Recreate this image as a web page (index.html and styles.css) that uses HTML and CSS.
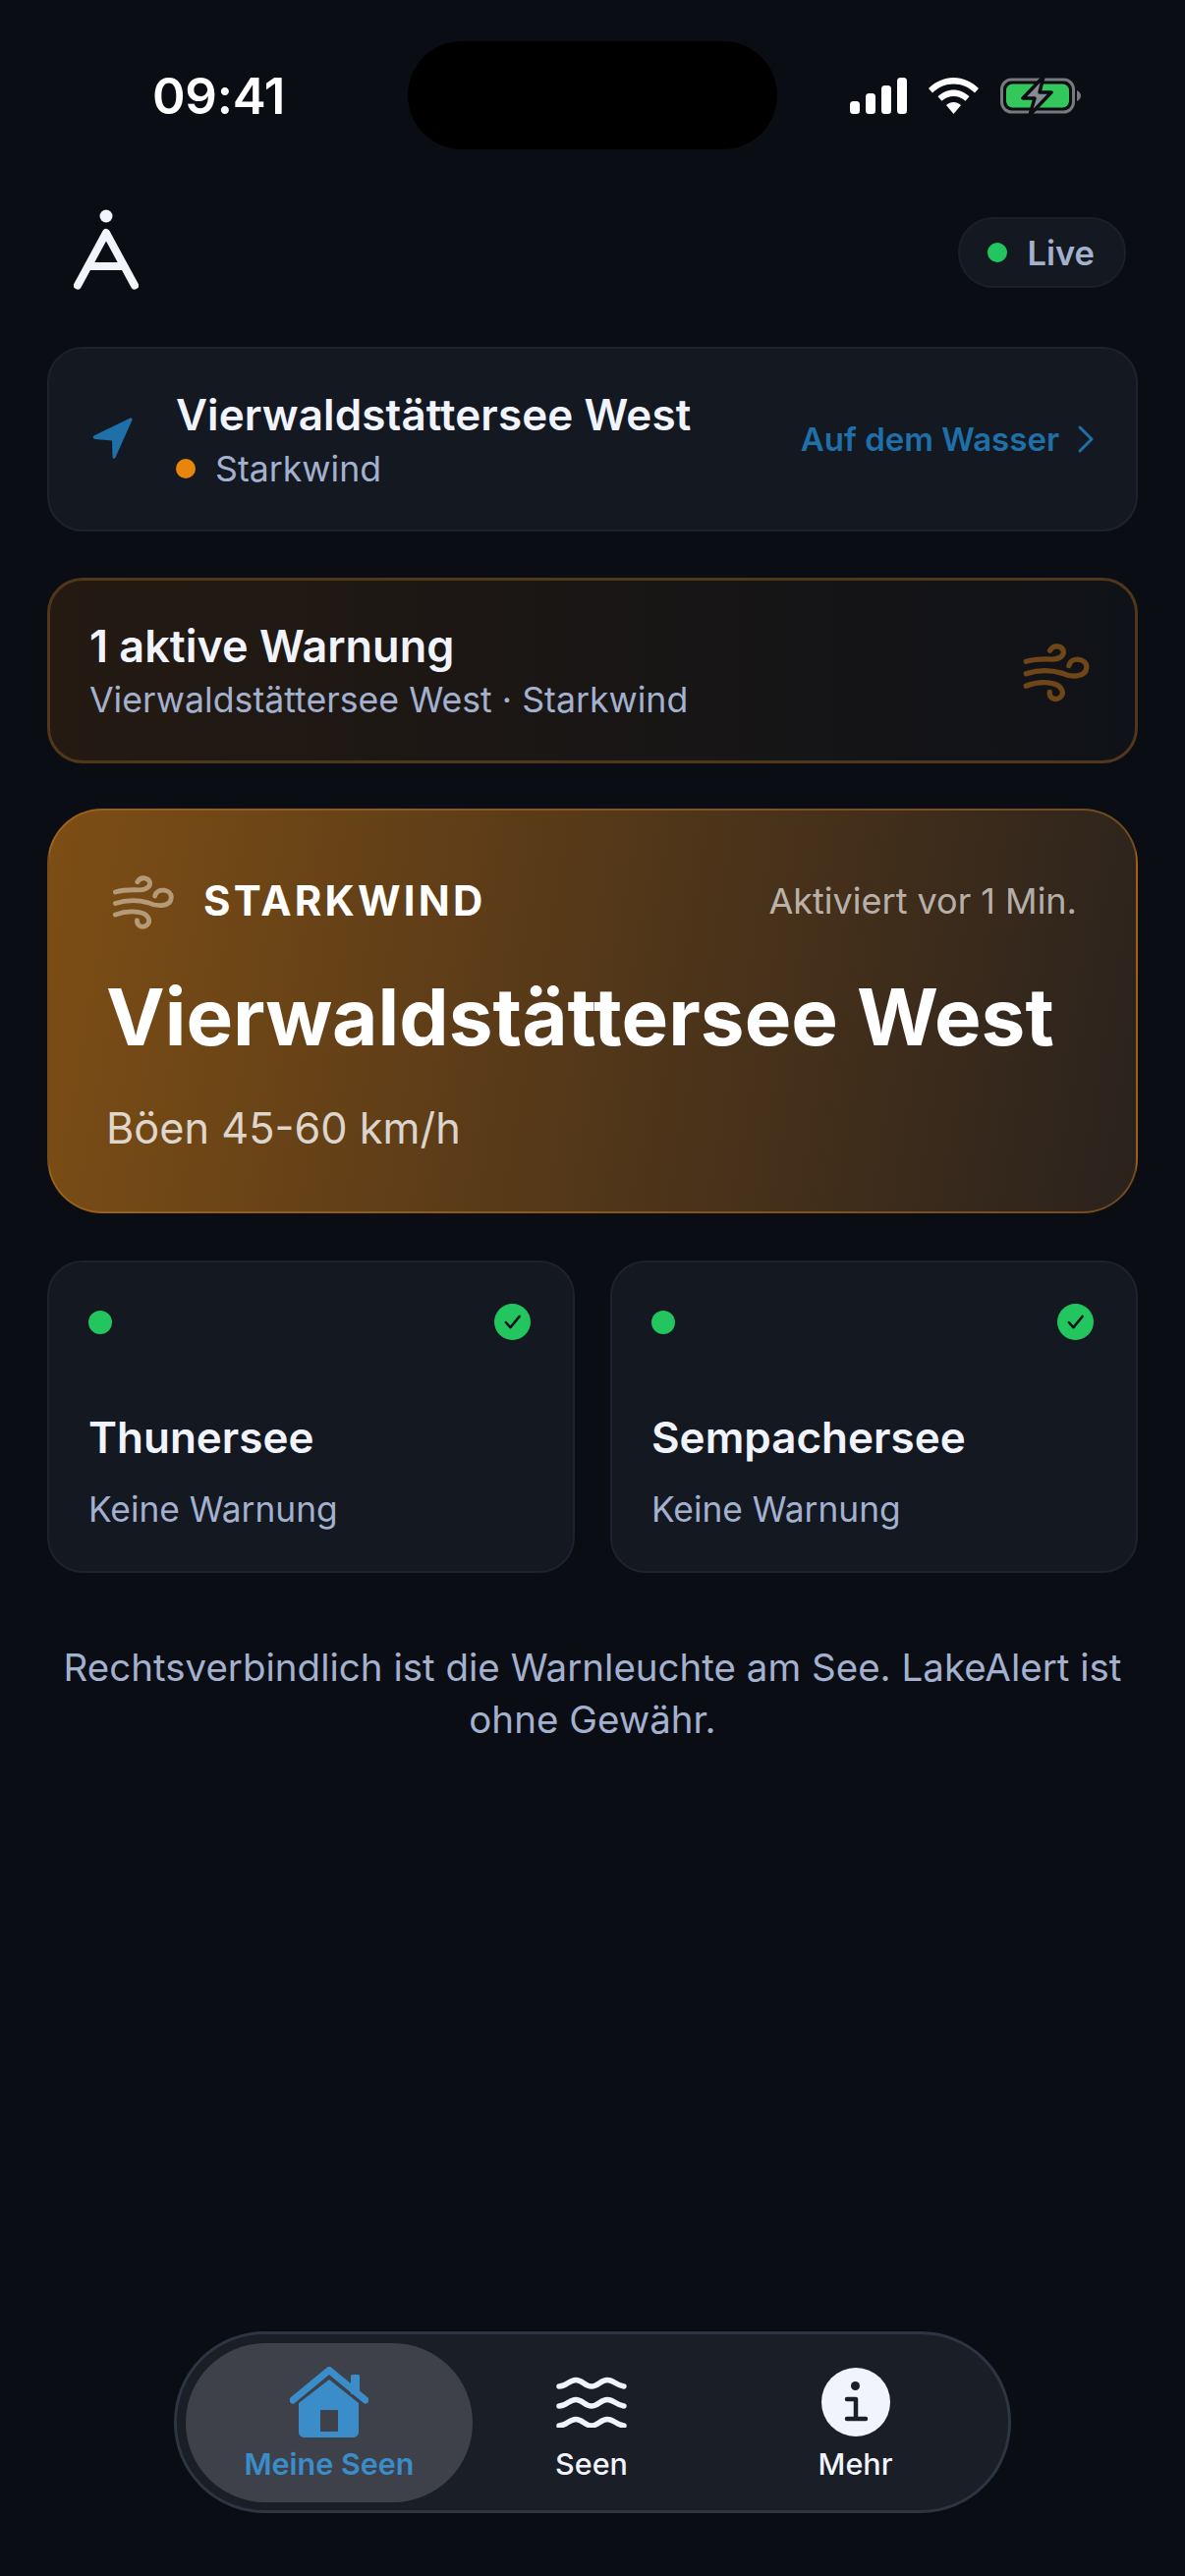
FILE: index.html
```html
<!DOCTYPE html>
<html lang="de">
<head>
    <meta charset="UTF-8">
    <meta name="viewport" content="width=device-width, initial-scale=1.0">
    <title>LakeAlert</title>
    <link rel="stylesheet" href="styles.css">
</head>
<body>

    <svg class="defs" width="0" height="0">
        <symbol id="wind" viewBox="0 0 360 240">
            <g fill="none" stroke="currentColor" stroke-width="16" stroke-linecap="round">
                <path d="M74 92C100 84 130 84 155 85C180 85 192 72 190 60C187 45 160 36 148 58"/>
                <path d="M74 130C110 118 150 118 185 128C210 140 260 145 262 110C262 82 215 75 207 105"/>
                <path d="M74 168C100 158 130 155 155 160C185 165 195 190 180 203C165 215 145 205 147 187"/>
            </g>
        </symbol>
        <symbol id="check" viewBox="0 0 36 36">
            <circle cx="18" cy="18" r="18" fill="#22c55e"/>
            <path d="M11.500 18.500l4.500 5 9-11" fill="none" stroke="#0c1218" stroke-width="2.400" stroke-linecap="round" stroke-linejoin="round"/>
        </symbol>
    </svg>

    <!-- status bar -->
    <div class="status">
        <span class="time">09:41</span>
        <div class="island"></div>
        <div class="status-icons">
            <svg width="58" height="37" viewBox="0 0 58 37" fill="#fff">
                <rect x="0" y="24" width="10" height="13" rx="3.500"/>
                <rect x="16" y="16" width="10" height="21" rx="3.500"/>
                <rect x="32" y="8" width="10" height="29" rx="3.500"/>
                <rect x="48" y="0" width="10" height="37" rx="3.500"/>
            </svg>
            <svg width="51" height="37" viewBox="0 0 51 37" fill="#fff">
                <path d="M25.500 0C35 0 44 4 51 11L47 15.500C41 9.700 33.500 6.500 25.500 6.500C17.500 6.500 10 9.700 4 15.500L0 11C7 4 16 0 25.500 0Z"/>
                <path d="M25.500 12.500C31.500 12.500 37 15 41.500 19.300L37.500 23.800C34.200 20.700 30 19 25.500 19C21 19 16.800 20.700 13.500 23.800L9.500 19.300C14 15 19.500 12.500 25.500 12.500Z"/>
                <path d="M25.500 25C28.200 25 30.800 26 33 28L25.500 37L18 28C20.200 26 22.800 25 25.500 25Z"/>
            </svg>
            <svg width="82" height="41" viewBox="0 0 82 41">
                <rect x="1.500" y="4" width="73" height="33" rx="10" fill="none" stroke="#77797d" stroke-width="3"/>
                <rect x="6" y="8.500" width="64" height="24" rx="6.500" fill="#34c759"/>
                <path d="M78 15c2.500 1 4 3 4 5.500s-1.500 4.500-4 5.500z" fill="#77797d"/>
                <path d="M44 1L23 23H35L30 40L52 17H40Z" fill="#8a8b8f" stroke="#0a0d14" stroke-width="3.500" stroke-linejoin="round"/>
            </svg>
        </div>
    </div>

    <header class="top">
        <svg class="logo" width="66" height="84" viewBox="0 0 66 84">
            <circle cx="33" cy="7" r="6.500" fill="#f1f4fc"/>
            <path d="M4 77.500L33 24L62 77.500M15 58H51" fill="none" stroke="#f1f4fc" stroke-width="8" stroke-linecap="round" stroke-linejoin="round"/>
        </svg>
        <div class="live"><i class="dot dot-green"></i>Live</div>
    </header>

    <main class="content">
        <section class="card current">
            <svg class="nav-icon" width="44" height="44" viewBox="0 0 44 44">
                <path d="M41.500 2.500L24.500 40.500C23.500 42.500 21.500 42 21.500 40L21 23.500L4 22C1.500 21.500 1 19.500 2.500 18.500L38.500 1C40.500 0 42 0.800 41.500 2.500Z" fill="#1f6fa8"/>
            </svg>
            <div class="current-text">
                <div class="current-name">Vierwaldstättersee West</div>
                <div class="current-state"><i class="dot dot-orange"></i>Starkwind</div>
            </div>
            <div class="current-link">
                Auf dem Wasser
                <svg width="18" height="28" viewBox="0 0 18 28">
                    <path d="M3 2L15 14L3 26" fill="none" stroke="#1f6fa8" stroke-width="3" stroke-linecap="round" stroke-linejoin="round"/>
                </svg>
            </div>
        </section>

        <section class="card warning">
            <div>
                <div class="warning-title">1 aktive Warnung</div>
                <div class="warning-sub">Vierwaldstättersee West · Starkwind</div>
            </div>
            <svg class="warning-icon" width="118" height="79"><use href="#wind"/></svg>
        </section>

        <section class="hero">
            <div class="hero-top">
                <svg class="hero-icon" width="109" height="73"><use href="#wind"/></svg>
                <span class="hero-label">STARKWIND</span>
                <span class="hero-time">Aktiviert vor 1 Min.</span>
            </div>
            <h1 class="hero-title">Vierwaldstättersee West</h1>
            <div class="hero-sub">Böen 45-60 km/h</div>
        </section>

        <div class="lakes">
            <section class="card lake">
                <div class="lake-top">
                    <i class="dot dot-lake"></i>
                    <svg width="37" height="37"><use href="#check"/></svg>
                </div>
                <div class="lake-name">Thunersee</div>
                <div class="lake-state">Keine Warnung</div>
            </section>
            <section class="card lake">
                <div class="lake-top">
                    <i class="dot dot-lake"></i>
                    <svg width="37" height="37"><use href="#check"/></svg>
                </div>
                <div class="lake-name">Sempachersee</div>
                <div class="lake-state">Keine Warnung</div>
            </section>
        </div>

        <p class="note">Rechtsverbindlich ist die Warnleuchte am See. LakeAlert ist ohne Gewähr.</p>
    </main>

    <nav class="tabs">
        <div class="tab tab-active">
            <div class="tab-icon">
                <svg width="80" height="72" viewBox="0 0 80 72">
                    <rect x="62" y="8" width="9" height="20" rx="1.500" fill="#3a8dc9"/>
                    <path d="M3 34L40 3.500L77 34" fill="none" stroke="#3a8dc9" stroke-width="7" stroke-linecap="round" stroke-linejoin="round"/>
                    <path d="M9 37L40 13L70 37V66C70 69.500 68 72 64 72H15C11 72 9 69.500 9 66Z" fill="#3a8dc9"/>
                    <rect x="31" y="44" width="18" height="22" rx="1" fill="#3e4149"/>
                </svg>
            </div>
            <span>Meine Seen</span>
        </div>
        <div class="tab">
            <div class="tab-icon">
                <svg width="72" height="52" viewBox="0 0 72 52">
                    <g fill="none" stroke="#f1f4fc" stroke-width="5.500" stroke-linecap="round">
                        <path d="M3 10C11 10 13 3.500 20 3.500C27 3.500 29 10 36 10C43 10 45 3.500 52 3.500C59 3.500 61 9 69 10"/>
                        <path d="M3 30C11 30 13 23.500 20 23.500C27 23.500 29 30 36 30C43 30 45 23.500 52 23.500C59 23.500 61 29 69 30"/>
                        <path d="M3 50C11 50 13 43.500 20 43.500C27 43.500 29 50 36 50C43 50 45 43.500 52 43.500C59 43.500 61 49 69 50"/>
                    </g>
                </svg>
            </div>
            <span>Seen</span>
        </div>
        <div class="tab">
            <div class="tab-icon">
                <svg width="70" height="70" viewBox="0 0 70 70">
                    <circle cx="35" cy="35" r="35" fill="#f1f4fc"/>
                    <circle cx="34.500" cy="18.500" r="4.500" fill="#1a1e27"/>
                    <path d="M26 32H35V52M26 52H45" fill="none" stroke="#1a1e27" stroke-width="4.500" stroke-linecap="round" stroke-linejoin="round"/>
                </svg>
            </div>
            <span>Mehr</span>
        </div>
    </nav>

</body>
</html>
```

FILE: styles.css
```css
* {
    box-sizing: border-box;
}
html, body {
    margin: 0;
    padding: 0;
}
body {
    width: 1206px;
    height: 2622px;
    display: flex;
    flex-direction: column;
    overflow: hidden;
    font-family: Inter, "Liberation Sans", sans-serif;
    background-color: #0a0d14;
    color: #f1f4fc;
}
.defs {
    position: absolute;
}
.dot {
    display: block;
    border-radius: 50%;
    flex: none;
}
.dot-green {
    width: 20px;
    height: 20px;
    background-color: #22c55e;
}
.dot-orange {
    width: 20px;
    height: 20px;
    background-color: #e8850c;
}
.dot-lake {
    width: 24px;
    height: 24px;
    background-color: #22c55e;
}

/* status bar */
.status {
    display: flex;
    align-items: center;
    height: 152px;
    padding-top: 42px;
}
.time {
    width: 415px;
    padding-left: 155px;
    font-size: 51px;
    font-weight: 600;
    letter-spacing: -0.3px;
    color: #fff;
}
.island {
    width: 376px;
    height: 110px;
    border-radius: 55px;
    background-color: #000;
}
.status-icons {
    display: flex;
    align-items: center;
    gap: 22px;
    margin-left: 74px;
}

/* logo and live badge */
.top {
    display: flex;
    justify-content: space-between;
    align-items: center;
    height: 90px;
    margin-top: 60px;
    padding: 0 60px 0 75px;
}
.logo {
    margin-bottom: 4px;
}
.live {
    display: flex;
    align-items: center;
    gap: 20px;
    height: 72px;
    padding: 0 30px 0 28px;
    border: 2px solid #1a1f28;
    border-radius: 36px;
    background-color: #131821;
    font-size: 34.500px;
    font-weight: 600;
    color: #a3b1cf;
}

.content {
    padding: 0 48px;
}
.card {
    border: 2px solid #1d222c;
    border-radius: 36px;
    background-color: #131821;
}

/* current lake */
.current {
    display: flex;
    align-items: center;
    height: 188px;
    margin-top: 51px;
    padding: 0 42px 0 43px;
}
.nav-icon {
    flex: none;
}
.current-text {
    margin-left: 42px;
    flex: 1;
}
.current-name {
    font-size: 44px;
    font-weight: 600;
    line-height: 54px;
    letter-spacing: 0.1px;
}
.current-state {
    display: flex;
    align-items: center;
    gap: 20px;
    margin-top: 6px;
    font-size: 35.700px;
    line-height: 44px;
    color: #a3b1cf;
}
.current-link {
    display: flex;
    align-items: center;
    gap: 18px;
    font-size: 33px;
    font-weight: 600;
    color: #1f6fa8;
}

/* warning banner */
.warning {
    display: flex;
    justify-content: space-between;
    align-items: center;
    height: 189px;
    margin-top: 47px;
    padding: 0 0 0 40px;
    border: 3px solid #50371a;
    background: linear-gradient(90deg, #241a12, #0f1218);
}
.warning-title {
    font-size: 45px;
    font-weight: 600;
    line-height: 54px;
    margin-bottom: 4px;
}
.warning-sub {
    font-size: 35.700px;
    line-height: 46px;
    color: #a3b1cf;
}
.warning-icon {
    color: #6e4618;
    margin-right: 17px;
}

/* big alert */
.hero {
    height: 412px;
    margin-top: 46px;
    padding: 55px 60px 0 58px;
    border: 2px solid rgba(200, 125, 30, 0.45);
    border-radius: 56px;
    background: linear-gradient(100deg, #7d4e15 0%, #5c3c18 40%, #2a221d 100%);
}
.hero-top {
    display: flex;
    align-items: center;
}
.hero-icon {
    color: #b59a78;
    flex: none;
    margin-left: -13px;
}
.hero-label {
    margin-left: 3px;
    font-size: 42px;
    font-weight: 700;
    letter-spacing: 3.200px;
    color: #fff;
}
.hero-time {
    margin-left: auto;
    font-size: 36px;
    color: rgba(255, 255, 255, 0.65);
}
.hero-title {
    margin: 34px 0 0;
    font-size: 80px;
    font-weight: 700;
    line-height: 96px;
    color: #fff;
}
.hero-sub {
    margin-top: 39px;
    font-size: 43.300px;
    line-height: 52px;
    color: rgba(255, 255, 255, 0.78);
}

/* other lakes */
.lakes {
    display: grid;
    grid-template-columns: 1fr 1fr;
    gap: 36px;
    margin-top: 48px;
}
.lake {
    height: 318px;
    padding: 42px 43px 0 40px;
}
.lake-top {
    display: flex;
    justify-content: space-between;
    align-items: center;
}
.lake-name {
    margin-top: 72px;
    font-size: 44px;
    font-weight: 600;
    line-height: 54px;
}
.lake-state {
    margin-top: 25px;
    font-size: 35.300px;
    line-height: 44px;
    color: #a3b1cf;
}

.note {
    margin: 70px 0 0;
    font-size: 38.500px;
    line-height: 53px;
    text-align: center;
    color: #a3b1cf;
}

/* bottom tabs */
.tabs {
    display: grid;
    grid-template-columns: 292px 242px 1fr;
    align-items: center;
    width: 852px;
    height: 185px;
    margin: auto 0 64px 177px;
    padding: 0 8px 0 9px;
    border: 3px solid #2d3543;
    border-radius: 92px;
    background-color: #1a1e27;
}
.tab {
    display: flex;
    flex-direction: column;
    align-items: center;
    height: 162px;
    padding-top: 24px;
    font-size: 30.500px;
    font-weight: 500;
}
.tab-icon {
    display: flex;
    align-items: center;
    height: 72px;
}
.tab span {
    margin-top: 8px;
}
.tab-active {
    border-radius: 81px;
    background-color: #3e4149;
    color: #3a8dc9;
    font-weight: 600;
}
```
